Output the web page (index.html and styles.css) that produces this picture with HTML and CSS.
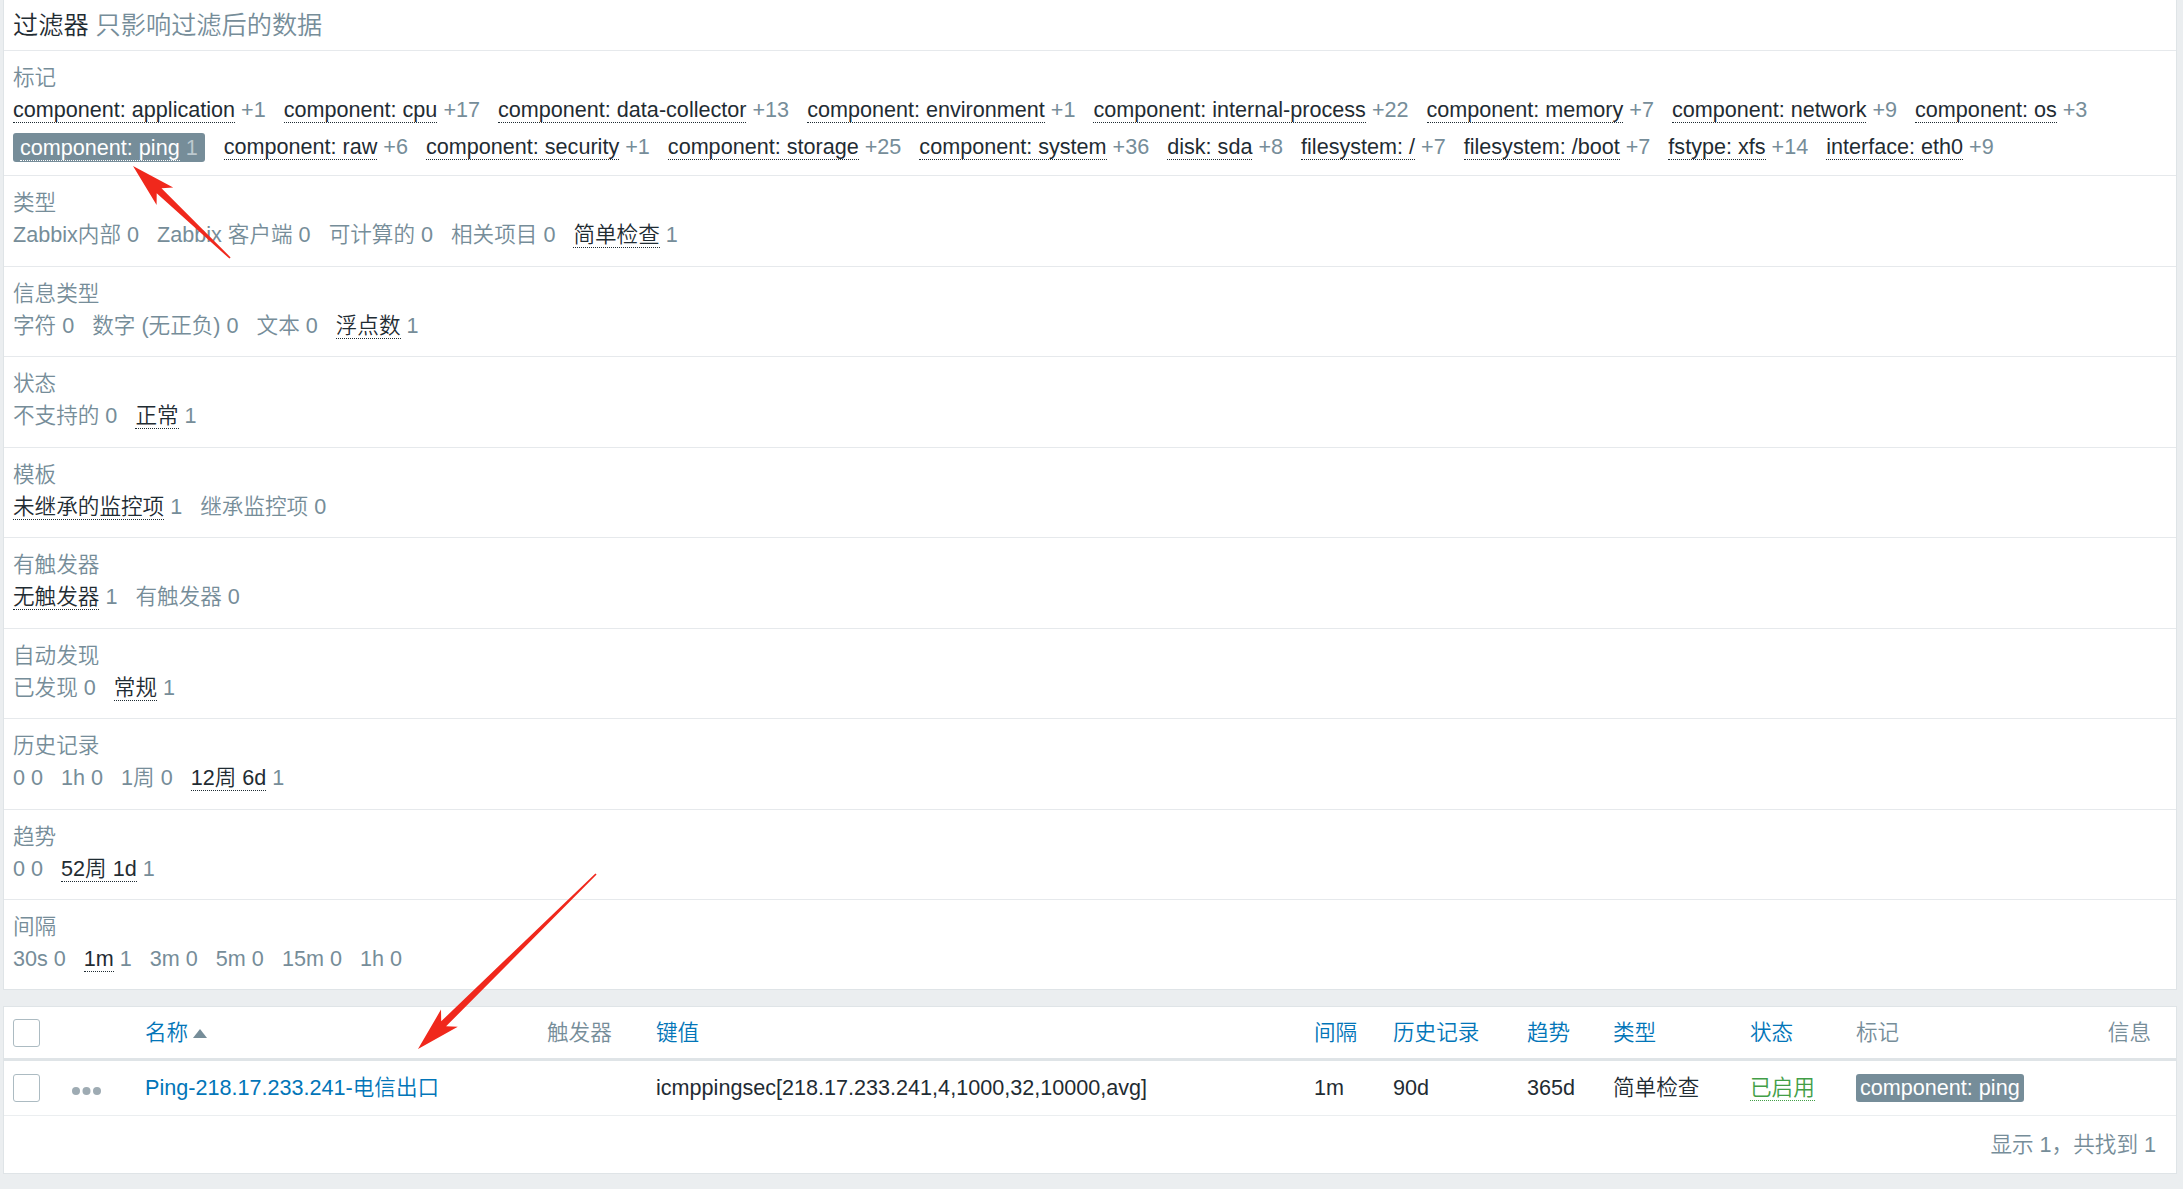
FILE: index.html
```html
<!DOCTYPE html>
<html lang="zh-CN">
<head>
<meta charset="utf-8">
<title>监控项</title>
<link rel="stylesheet" href="styles.css">
</head>
<body>
<div class="page">
  <section class="filter">
    <div class="filter-head"><span class="title">过滤器</span> <span class="hint">只影响过滤后的数据</span></div>

    <div class="sub-section tags">
      <div class="sub-label">标记</div>
      <div class="sub-list">
        <span class="sub"><span class="sub-link">component: application</span> <span class="cnt">+1</span></span>
        <span class="sub"><span class="sub-link">component: cpu</span> <span class="cnt">+17</span></span>
        <span class="sub"><span class="sub-link">component: data-collector</span> <span class="cnt">+13</span></span>
        <span class="sub"><span class="sub-link">component: environment</span> <span class="cnt">+1</span></span>
        <span class="sub"><span class="sub-link">component: internal-process</span> <span class="cnt">+22</span></span>
        <span class="sub"><span class="sub-link">component: memory</span> <span class="cnt">+7</span></span>
        <span class="sub"><span class="sub-link">component: network</span> <span class="cnt">+9</span></span>
        <span class="sub"><span class="sub-link">component: os</span> <span class="cnt">+3</span></span>
        <span class="sub selected"><span class="sub-link">component: ping</span> <span class="cnt">1</span></span>
        <span class="sub"><span class="sub-link">component: raw</span> <span class="cnt">+6</span></span>
        <span class="sub"><span class="sub-link">component: security</span> <span class="cnt">+1</span></span>
        <span class="sub"><span class="sub-link">component: storage</span> <span class="cnt">+25</span></span>
        <span class="sub"><span class="sub-link">component: system</span> <span class="cnt">+36</span></span>
        <span class="sub"><span class="sub-link">disk: sda</span> <span class="cnt">+8</span></span>
        <span class="sub"><span class="sub-link">filesystem: /</span> <span class="cnt">+7</span></span>
        <span class="sub"><span class="sub-link">filesystem: /boot</span> <span class="cnt">+7</span></span>
        <span class="sub"><span class="sub-link">fstype: xfs</span> <span class="cnt">+14</span></span>
        <span class="sub"><span class="sub-link">interface: eth0</span> <span class="cnt">+9</span></span>
      </div>
    </div>

    <div class="sub-section">
      <div class="sub-label">类型</div>
      <div class="sub-list">
        <span class="sub off">Zabbix内部 0</span>
        <span class="sub off">Zabbix 客户端 0</span>
        <span class="sub off">可计算的 0</span>
        <span class="sub off">相关项目 0</span>
        <span class="sub"><span class="sub-link">简单检查</span> <span class="cnt">1</span></span>
      </div>
    </div>

    <div class="sub-section">
      <div class="sub-label">信息类型</div>
      <div class="sub-list">
        <span class="sub off">字符 0</span>
        <span class="sub off">数字 (无正负) 0</span>
        <span class="sub off">文本 0</span>
        <span class="sub"><span class="sub-link">浮点数</span> <span class="cnt">1</span></span>
      </div>
    </div>

    <div class="sub-section">
      <div class="sub-label">状态</div>
      <div class="sub-list">
        <span class="sub off">不支持的 0</span>
        <span class="sub"><span class="sub-link">正常</span> <span class="cnt">1</span></span>
      </div>
    </div>

    <div class="sub-section">
      <div class="sub-label">模板</div>
      <div class="sub-list">
        <span class="sub"><span class="sub-link">未继承的监控项</span> <span class="cnt">1</span></span>
        <span class="sub off">继承监控项 0</span>
      </div>
    </div>

    <div class="sub-section">
      <div class="sub-label">有触发器</div>
      <div class="sub-list">
        <span class="sub"><span class="sub-link">无触发器</span> <span class="cnt">1</span></span>
        <span class="sub off">有触发器 0</span>
      </div>
    </div>

    <div class="sub-section">
      <div class="sub-label">自动发现</div>
      <div class="sub-list">
        <span class="sub off">已发现 0</span>
        <span class="sub"><span class="sub-link">常规</span> <span class="cnt">1</span></span>
      </div>
    </div>

    <div class="sub-section">
      <div class="sub-label">历史记录</div>
      <div class="sub-list">
        <span class="sub off">0 0</span>
        <span class="sub off">1h 0</span>
        <span class="sub off">1周 0</span>
        <span class="sub"><span class="sub-link">12周 6d</span> <span class="cnt">1</span></span>
      </div>
    </div>

    <div class="sub-section">
      <div class="sub-label">趋势</div>
      <div class="sub-list">
        <span class="sub off">0 0</span>
        <span class="sub"><span class="sub-link">52周 1d</span> <span class="cnt">1</span></span>
      </div>
    </div>

    <div class="sub-section last">
      <div class="sub-label">间隔</div>
      <div class="sub-list">
        <span class="sub off">30s 0</span>
        <span class="sub"><span class="sub-link">1m</span> <span class="cnt">1</span></span>
        <span class="sub off">3m 0</span>
        <span class="sub off">5m 0</span>
        <span class="sub off">15m 0</span>
        <span class="sub off">1h 0</span>
      </div>
    </div>
  </section>

  <section class="items">
    <div class="row head">
      <span class="cb"></span>
      <span></span>
      <span class="sort">名称<span class="sort-up"></span></span>
      <span class="plain">触发器</span>
      <span class="sort">键值</span>
      <span class="sort">间隔</span>
      <span class="sort">历史记录</span>
      <span class="sort">趋势</span>
      <span class="sort">类型</span>
      <span class="sort">状态</span>
      <span class="plain">标记</span>
      <span class="plain info">信息</span>
    </div>
    <div class="row data">
      <span class="cb"></span>
      <span class="more"><svg width="29" height="8" viewBox="0 0 29 8"><circle cx="4" cy="4" r="4"/><circle cx="14.5" cy="4" r="4"/><circle cx="25" cy="4" r="4"/></svg></span>
      <span class="name">Ping-218.17.233.241-电信出口</span>
      <span></span>
      <span>icmppingsec[218.17.233.241,4,1000,32,10000,avg]</span>
      <span>1m</span>
      <span>90d</span>
      <span>365d</span>
      <span>简单检查</span>
      <span><span class="enabled">已启用</span></span>
      <span><span class="tag">component: ping</span></span>
      <span></span>
    </div>
    <div class="items-foot">显示 1，共找到 1</div>
  </section>

  <svg class="annot" width="2183" height="1189" viewBox="0 0 2183 1189">
    <polygon points="133,166 173.2,187.6 161.5,188.3 230.6,257.4 229.4,258.6 156.7,193.3 156.6,205"/>
    <polygon points="418,1049 457.8,1026.8 446.1,1026.3 596.6,874.6 595.4,873.4 441.2,1021.3 441,1009.6"/>
  </svg>
</div>
</body>
</html>
```

FILE: styles.css
```css
html, body {
  margin: 0;
  padding: 0;
}

body {
  background: #ebeef0;
  font-family: "Liberation Sans", Arial, "Noto Sans CJK SC", sans-serif;
  font-size: 21.6px;
  font-weight: 350;
  color: #1f2c33;
  min-height: 1189px;
}

.page {
  position: relative;
  padding: 0 6px 0 3px;
}

/* ---------- filter ---------- */
.filter {
  background: #fff;
  border: 1px solid #dfe4e7;
  border-top: 0;
}

.filter-head {
  height: 50px;
  line-height: 50px;
  padding-left: 9px;
  font-size: 25.2px;
  border-bottom: 1px solid #e6e9ec;
}

.filter-head .title {
  color: #1f2c33;
}

.filter-head .hint {
  color: #768d99;
}

.sub-section {
  padding: 11px 9px 14.5px;
  border-bottom: 1px solid #e6e9ec;
}

.sub-section.tags {
  padding: 11px 9px 12px;
}

.sub-section.last {
  padding-bottom: 14px;
  border-bottom: 0;
}

.sub-label {
  color: #768d99;
  line-height: 32px;
}

.sub-list {
  display: flex;
  flex-wrap: wrap;
  align-items: center;
  column-gap: 18px;
  row-gap: 5px;
  line-height: 32px;
}

.sub {
  white-space: nowrap;
  color: #768d99;
}

.sub-link {
  color: #1f2c33;
  border-bottom: 1px dotted #1f2c33;
}

.cnt {
  color: #768d99;
}

.sub.selected {
  background: #768d99;
  border-radius: 3px;
  padding: 0 7px;
  line-height: 29px;
  margin-right: 1px;
}

.sub.selected .sub-link {
  color: #fff;
  border-bottom-color: #fff;
}

.sub.selected .cnt {
  color: #bdc9cf;
}

/* ---------- items table ---------- */
.items {
  margin-top: 16px;
  background: #fff;
  border: 1px solid #dfe4e7;
}

.row {
  display: grid;
  grid-template-columns: 59px 73px 402px 109px 658px 79px 134px 86px 137px 106px 1fr auto;
  align-items: center;
  padding: 0 25px 0 9px;
  white-space: nowrap;
  line-height: 24px;
}

.row.head {
  height: 51px;
  border-bottom: 3px solid #dfe4e7;
}

.row.data {
  height: 54px;
  border-bottom: 1px solid #ebeef0;
}

.cb {
  display: block;
  width: 27px;
  height: 28px;
  box-sizing: border-box;
  border: 1px solid #acbbc2;
  border-radius: 3px;
  background: #fff;
}

.sort {
  color: #0275b8;
}

.plain {
  color: #768d99;
}

.info {
  text-align: right;
}

.sort-up {
  display: inline-block;
  width: 0;
  height: 0;
  margin-left: 5px;
  border-left: 7px solid transparent;
  border-right: 7px solid transparent;
  border-bottom: 9px solid #768d99;
  vertical-align: 2px;
}

.more {
  display: flex;
  align-items: center;
  padding-top: 5px;
}

.more svg {
  fill: #9eabb3;
}

.name {
  color: #0275b8;
}

.enabled {
  color: #429e47;
  border-bottom: 1px dotted #429e47;
}

.tag {
  display: inline-block;
  background: #768d99;
  color: #fff;
  border-radius: 3px;
  padding: 0 4px;
  line-height: 28px;
}

.items-foot {
  height: 57px;
  line-height: 57px;
  text-align: right;
  padding-right: 20px;
  color: #768d99;
}

/* ---------- annotation arrows ---------- */
.annot {
  position: absolute;
  top: 0;
  left: 0;
  pointer-events: none;
}

.annot polygon {
  fill: #f0281c;
}
```
